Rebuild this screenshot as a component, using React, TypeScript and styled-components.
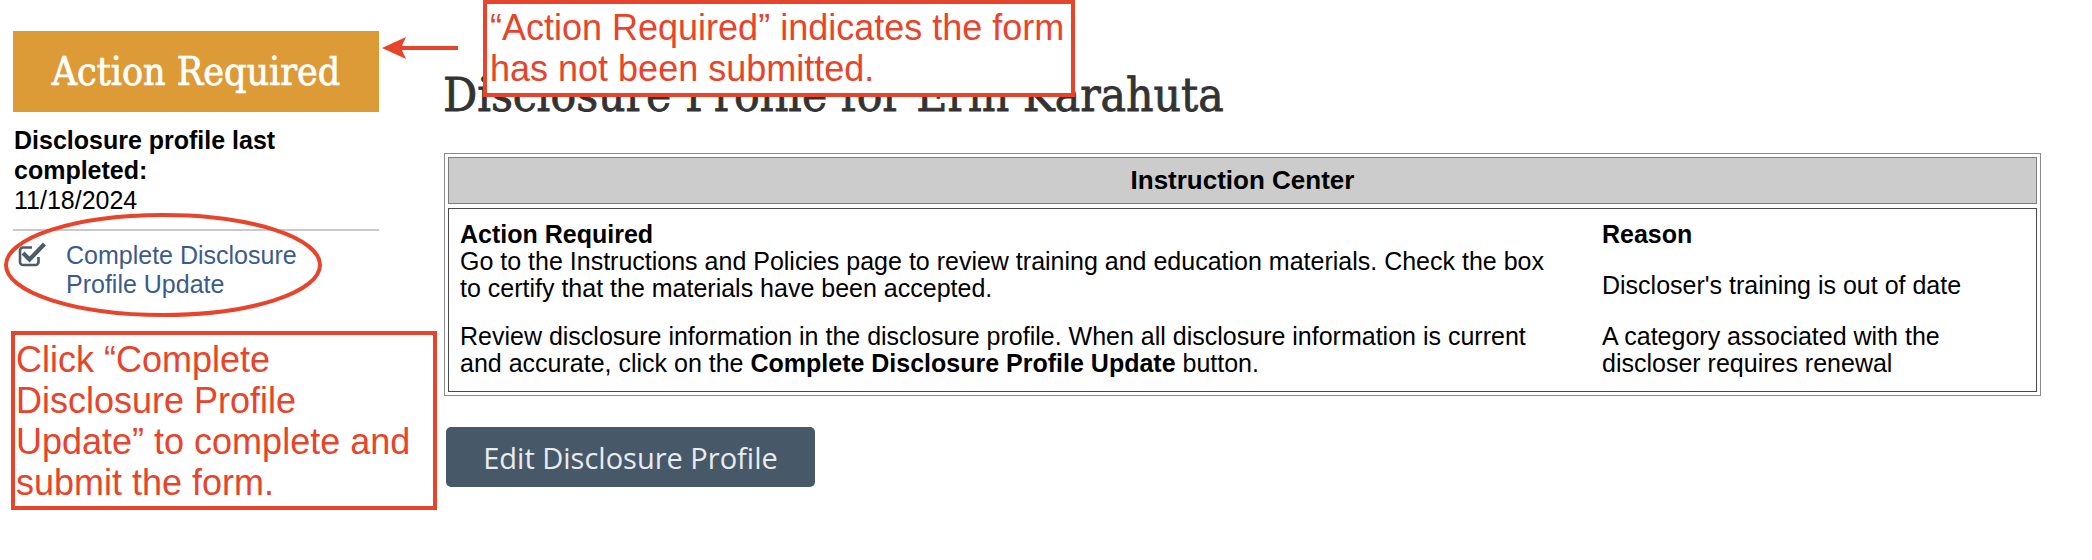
import React from "react";
import styled, { createGlobalStyle } from "styled-components";

const annotationRed = "#e8432b";

const GlobalStyle = createGlobalStyle`
  html, body {
    margin: 0;
    padding: 0;
    background: #fff;
  }
  body {
    font-family: "Liberation Sans", Arial, sans-serif;
    color: #000;
  }
`;

const Page = styled.div`
  position: relative;
  display: flex;
  align-items: flex-start;
  width: 2092px;
  height: 560px;
  padding-left: 13px;
  box-sizing: border-box;
  overflow: hidden;
`;

const Sidebar = styled.aside`
  flex: none;
  width: 366px;
  padding-top: 31px;
`;

const StatusBanner = styled.div`
  height: 81px;
  display: flex;
  align-items: center;
  justify-content: center;
  background: #dd9b37;
  color: #fff;
  font-family: "DejaVu Serif Condensed", "DejaVu Serif", serif;
  font-size: 39px;
  -webkit-text-stroke: 0.7px #fff;
`;

const CompletedLabel = styled.div`
  margin-top: 13px;
  padding-left: 1px;
  font-size: 25px;
  line-height: 30px;
  font-weight: bold;
`;

const CompletedDate = styled.div`
  padding-left: 1px;
  font-size: 25px;
  line-height: 30px;
`;

const Divider = styled.hr`
  margin: 14px 0 0;
  border: 0;
  border-top: 2px solid #c9c9c9;
`;

const ActionLink = styled.a`
  display: flex;
  align-items: flex-start;
  gap: 20px;
  margin-top: 10px;
  padding-left: 5px;
  color: #3b5b8c;
  font-size: 25px;
  line-height: 29px;
  text-decoration: none;
  cursor: pointer;
`;

const LinkLabel = styled.span`
  width: 250px;
`;

const LinkIcon = styled.svg`
  flex: none;
  margin-top: 1px;
`;

const Main = styled.main`
  flex: 1;
  margin-left: 64px;
  padding-right: 51px;
  padding-top: 70px;
`;

const PageTitle = styled.h1`
  margin: 0 0 33px;
  font-family: "DejaVu Serif Condensed", "DejaVu Serif", serif;
  font-weight: normal;
  font-size: 47.5px;
  line-height: 50px;
  color: #333;
  -webkit-text-stroke: 0.8px #333;
  white-space: nowrap;
`;

const InstructionTable = styled.section`
  margin-left: 1px;
  display: flex;
  flex-direction: column;
  gap: 4px;
  padding: 3px;
  border: 1px solid #8a8a8a;
`;

const TableCaption = styled.div`
  height: 45px;
  display: flex;
  align-items: center;
  justify-content: center;
  background: #cccccc;
  border: 1px solid #7d7d7d;
  font-size: 26px;
  font-weight: bold;
`;

const TableBody = styled.div`
  display: grid;
  grid-template-columns: 1100px 1fr;
  column-gap: 42px;
  padding: 12px 10px 14px 11px;
  border: 1px solid #4a4a4a;
  font-size: 25px;
  line-height: 27px;
`;

const ColumnHead = styled.div`
  font-weight: bold;
`;

const ActionText = styled.div<{ $spaced?: boolean }>`
  padding-bottom: ${(p) => (p.$spaced ? "21px" : "0")};
`;

const ReasonText = styled.div`
  align-self: center;
`;

const EditButton = styled.button`
  margin: 31px 0 0 3px;
  width: 369px;
  height: 60px;
  border: 0;
  border-radius: 5px;
  background: #475868;
  color: #e9ecef;
  font-family: "Open Sans", "Liberation Sans", sans-serif;
  font-size: 29px;
  cursor: pointer;
`;

const Note = styled.div<{ $left: number; $top: number; $width: number; $pad: string }>`
  position: absolute;
  left: ${(p) => p.$left}px;
  top: ${(p) => p.$top}px;
  width: ${(p) => p.$width}px;
  box-sizing: border-box;
  padding: ${(p) => p.$pad};
  border: 4px solid ${annotationRed};
  background: #fff;
  color: ${annotationRed};
  font-size: 36px;
  line-height: 41px;
`;

const Overlay = styled.svg<{ $left: number; $top: number }>`
  position: absolute;
  left: ${(p) => p.$left}px;
  top: ${(p) => p.$top}px;
  overflow: visible;
`;

const CheckSquareIcon = () => (
  <LinkIcon width="28" height="26" viewBox="0 0 28 26">
    <path
      d="M14 5.5H5a3 3 0 0 0-3 3V20a3 3 0 0 0 3 3h12.5a3 3 0 0 0 3-3v-5"
      fill="none"
      stroke="#4d5b69"
      strokeWidth="2.6"
    />
    <path d="M6.5 12.5l5 5L25 3.5" fill="none" stroke="#4d5b69" strokeWidth="4.2" strokeLinecap="square" />
  </LinkIcon>
);

export default function App() {
  return (
    <>
      <GlobalStyle />
      <Page>
        <Sidebar>
          <StatusBanner>Action Required</StatusBanner>
          <CompletedLabel>Disclosure profile last completed:</CompletedLabel>
          <CompletedDate>11/18/2024</CompletedDate>
          <Divider />
          <ActionLink>
            <CheckSquareIcon />
            <LinkLabel>Complete Disclosure Profile Update</LinkLabel>
          </ActionLink>
        </Sidebar>

        <Main>
          <PageTitle>Disclosure Profile for Erin Karahuta</PageTitle>
          <InstructionTable>
            <TableCaption>Instruction Center</TableCaption>
            <TableBody>
              <ColumnHead>Action Required</ColumnHead>
              <ColumnHead>Reason</ColumnHead>
              <ActionText $spaced>
                Go to the Instructions and Policies page to review training and education materials. Check the box to
                certify that the materials have been accepted.
              </ActionText>
              <ReasonText>Discloser's training is out of date</ReasonText>
              <ActionText>
                Review disclosure information in the disclosure profile. When all disclosure information is current and
                accurate, click on the <b>Complete Disclosure Profile Update</b> button.
              </ActionText>
              <ReasonText>A category associated with the discloser requires renewal</ReasonText>
            </TableBody>
          </InstructionTable>
          <EditButton>Edit Disclosure Profile</EditButton>
        </Main>

        {/* annotations laid over the page */}
        <Overlay $left={381} $top={36} width="80" height="24" viewBox="0 0 80 24">
          <line x1="20" y1="12" x2="77" y2="12" stroke={annotationRed} strokeWidth="4" />
          <polygon points="1,12 25,1 20,12 25,23" fill={annotationRed} />
        </Overlay>
        <Overlay $left={2} $top={211} width="322" height="106" viewBox="0 0 322 106">
          <ellipse cx="161" cy="54" rx="157" ry="50" fill="none" stroke={annotationRed} strokeWidth="4" />
        </Overlay>
        <Note $left={483} $top={0} $width={592} $pad="3px 4px 4px 3px">
          “Action Required” indicates the form has not been submitted.
        </Note>
        <Note $left={11} $top={331} $width={426} $pad="4px 10px 3px 1px">
          Click “Complete Disclosure Profile Update” to complete and submit the form.
        </Note>
      </Page>
    </>
  );
}
